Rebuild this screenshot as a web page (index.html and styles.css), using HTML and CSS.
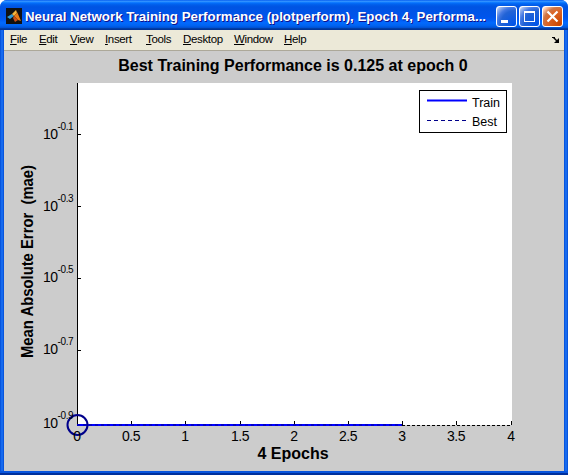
FILE: index.html
```html
<!DOCTYPE html>
<html lang="en">
<head>
  <meta charset="UTF-8">
  <title>Neural Network Training Performance (plotperform)</title>
  <link rel="stylesheet" href="styles.css">
</head>
<body>
  <div class="window">
    <div class="titlebar">
      <svg class="appicon" width="16" height="16" viewBox="0 0 16 16">
        <rect width="16" height="16" fill="#111"/>
        <polygon points="1,9 6,6 8,8 4,11" fill="#2f9ad8"/>
        <polygon points="6,6 10,2 11,5 8,8" fill="#f5b53c"/>
        <polygon points="10,2 12,6 15,13 12,12 8,8 11,5" fill="#ea7a16"/>
        <polygon points="8,8 12,12 9,14 7,10" fill="#c8501a"/>
      </svg>
      <span class="title">Neural Network Training Performance (plotperform), Epoch 4, Performa...</span>
      <div class="capbtn">
        <svg width="21" height="21" viewBox="0 0 21 21"><rect x="5" y="14" width="7" height="3" fill="#fff"/></svg>
      </div>
      <div class="capbtn">
        <svg width="21" height="21" viewBox="0 0 21 21"><rect x="5.5" y="5.5" width="10" height="10" fill="none" stroke="#fff"/><rect x="5" y="5" width="11" height="2" fill="#fff"/></svg>
      </div>
      <div class="capbtn close">
        <svg width="21" height="21" viewBox="0 0 21 21"><path d="M5.5 5.5 L15.5 15.5 M15.5 5.5 L5.5 15.5" stroke="#fff" stroke-width="2.2"/></svg>
      </div>
    </div>

    <div class="inner">
      <div class="menubar">
        <span class="menu m-file"><u>F</u>ile</span>
        <span class="menu m-edit"><u>E</u>dit</span>
        <span class="menu m-view"><u>V</u>iew</span>
        <span class="menu m-insert"><u>I</u>nsert</span>
        <span class="menu m-tools"><u>T</u>ools</span>
        <span class="menu m-desktop"><u>D</u>esktop</span>
        <span class="menu m-window"><u>W</u>indow</span>
        <span class="menu m-help"><u>H</u>elp</span>
        <svg class="dock" width="8" height="6" viewBox="0 0 8 6">
          <path d="M0 0 H3 V1 H0 Z M2 0 L5 3 L7 1 V6 H2 L4 4 L1 1 Z" fill="#000"/>
        </svg>
      </div>

      <svg class="figure" width="560" height="420" viewBox="4 51 560 420">
        <text class="axtitle" x="293" y="71">Best Training Performance is 0.125 at epoch 0</text>
        <rect x="77" y="83" width="435" height="342" fill="#fff"/>

        <!-- axis lines and ticks -->
        <path class="axis" d="M77.5 83 V425.5 M131.5 421 V425 M185.5 421 V425 M240.5 421 V425 M294.5 421 V425 M348.5 421 V425 M402.5 421 V425 M456.5 421 V425 M511.5 421 V425"/>
        <path class="axis" d="M77 134.5 H81 M77 206.5 H81 M77 278.5 H81 M77 350.5 H81 M77 424.5 H81"/>

        <!-- curves -->
        <line class="best-rest" x1="402" y1="425.5" x2="512" y2="425.5"/>
        <line class="train" x1="77" y1="425" x2="402" y2="425"/>
        <line class="best" x1="77" y1="425" x2="402" y2="425"/>
        <circle class="marker" cx="77.5" cy="425" r="10"/>

        <!-- y tick labels -->
        <text class="tick" x="43" y="139">10<tspan class="sup" dy="-9">-0.1</tspan></text>
        <text class="tick" x="43" y="211">10<tspan class="sup" dy="-9">-0.3</tspan></text>
        <text class="tick" x="43" y="282">10<tspan class="sup" dy="-9">-0.5</tspan></text>
        <text class="tick" x="43" y="354">10<tspan class="sup" dy="-9">-0.7</tspan></text>
        <text class="tick" x="43" y="428">10<tspan class="sup" dy="-9">-0.9</tspan></text>

        <!-- x tick labels -->
        <text class="tick mid" x="77" y="441">0</text>
        <text class="tick mid" x="131" y="441">0.5</text>
        <text class="tick mid" x="185" y="441">1</text>
        <text class="tick mid" x="240" y="441">1.5</text>
        <text class="tick mid" x="294" y="441">2</text>
        <text class="tick mid" x="348" y="441">2.5</text>
        <text class="tick mid" x="402" y="441">3</text>
        <text class="tick mid" x="456" y="441">3.5</text>
        <text class="tick mid" x="511" y="441">4</text>

        <text class="axlabel" x="293" y="459">4 Epochs</text>
        <text class="axlabel ylabel" transform="translate(33 261.5) rotate(-90)" textLength="193" lengthAdjust="spacingAndGlyphs">Mean Absolute Error  (mae)</text>

        <!-- legend -->
        <rect class="legend" x="419.5" y="90.5" width="87" height="42"/>
        <line class="train" x1="427" y1="100.5" x2="467" y2="100.5"/>
        <line class="legend-best" x1="427" y1="120.5" x2="467" y2="120.5"/>
        <text class="legend-text" x="472" y="107">Train</text>
        <text class="legend-text" x="472" y="126">Best</text>
      </svg>
    </div>
  </div>
</body>
</html>
```
FILE: styles.css
```css
html, body {
  margin: 0;
  padding: 0;
  background: #fff;
}
.window {
  width: 568px;
  height: 475px;
  display: flex;
  flex-direction: column;
  overflow: hidden;
  border-radius: 7px 7px 0 0;
  background: linear-gradient(to bottom, #0855dd calc(100% - 2px), #00309c calc(100% - 2px));
}
.titlebar {
  height: 30px;
  flex: none;
  display: flex;
  align-items: center;
  box-sizing: border-box;
  padding: 2px 5px 0 6px;
  background: linear-gradient(to bottom, #0058ee 0%, #3593ff 4%, #288eff 6%, #127dff 8%, #036ffc 10%, #0262ee 14%, #0057e5 20%, #0054e3 24%, #0055eb 56%, #005bf5 66%, #026afe 76%, #0062ef 86%, #0052d6 92%, #0040ab 94%, #003092 100%);
}
.appicon {
  flex: none;
  margin-right: 3px;
}
.title {
  flex: 1;
  min-width: 0;
  font-family: "Liberation Sans", sans-serif;
  font-size: 13.3px;
  font-weight: bold;
  color: #fff;
  white-space: nowrap;
  text-shadow: 1px 1px 0 #0f1089;
}
.capbtn {
  width: 21px;
  height: 21px;
  flex: none;
  margin-left: 2px;
  box-sizing: border-box;
  border: 1px solid #fff;
  border-radius: 3px;
  background: radial-gradient(circle at 90% 90%, #0054e9 0%, #2263d5 55%, #4479e4 70%, #a3bbec 90%, #fff 100%);
}
.capbtn svg {
  display: block;
  margin: -1px;
}
.capbtn.close {
  background: radial-gradient(circle at 90% 90%, #cc4600 0%, #dc6527 55%, #cd7546 70%, #ffccb2 90%, #fff 100%);
}
.inner {
  flex: 1;
  display: flex;
  flex-direction: column;
  margin: 0 4px 4px;
  background: #ccc;
  box-shadow: -1px 0 0 #0855dd, 1px 0 0 #0855dd, -3px 0 0 #166aee, 3px 0 0 #166aee;
}
.menubar {
  height: 20px;
  flex: none;
  position: relative;
  background: #ece9d8;
  border-bottom: 1px solid #aca899;
  font-family: "Liberation Sans", sans-serif;
  font-size: 11.5px;
  letter-spacing: -0.35px;
  line-height: 19px;
  color: #000;
}
.menu {
  position: absolute;
  top: 0;
}
.m-file { left: 6px; }
.m-edit { left: 35px; }
.m-view { left: 66px; }
.m-insert { left: 101px; }
.m-tools { left: 142px; }
.m-desktop { left: 179px; }
.m-window { left: 230px; }
.m-help { left: 280px; }
.dock {
  position: absolute;
  right: 4px;
  top: 7px;
}
.figure {
  display: block;
  flex: none;
  font-family: "Liberation Sans", sans-serif;
}
.axtitle {
  font-size: 16px;
  font-weight: bold;
  text-anchor: middle;
  fill: #000;
}
.axlabel {
  font-size: 16px;
  font-weight: bold;
  text-anchor: middle;
  fill: #000;
}
.ylabel {
  white-space: pre;
}
.tick {
  font-size: 14px;
  letter-spacing: -0.5px;
  fill: #000;
}
.tick.mid {
  text-anchor: middle;
}
.sup {
  font-size: 10px;
  letter-spacing: -0.4px;
}
.axis {
  fill: none;
  stroke: #000;
  stroke-width: 1;
}
.train {
  stroke: #0000ff;
  stroke-width: 2;
}
.best {
  stroke: #00008b;
  stroke-width: 1;
  stroke-dasharray: 3 3;
}
.best-rest {
  stroke: #000;
  stroke-width: 1;
  stroke-dasharray: 3 2;
}
.marker {
  fill: none;
  stroke: #00008b;
  stroke-width: 2;
}
.legend {
  fill: #fff;
  stroke: #000;
  stroke-width: 1;
}
.legend-best {
  stroke: #00008b;
  stroke-width: 1;
  stroke-dasharray: 4 3;
}
.legend-text {
  font-size: 12.5px;
  fill: #000;
}
```
